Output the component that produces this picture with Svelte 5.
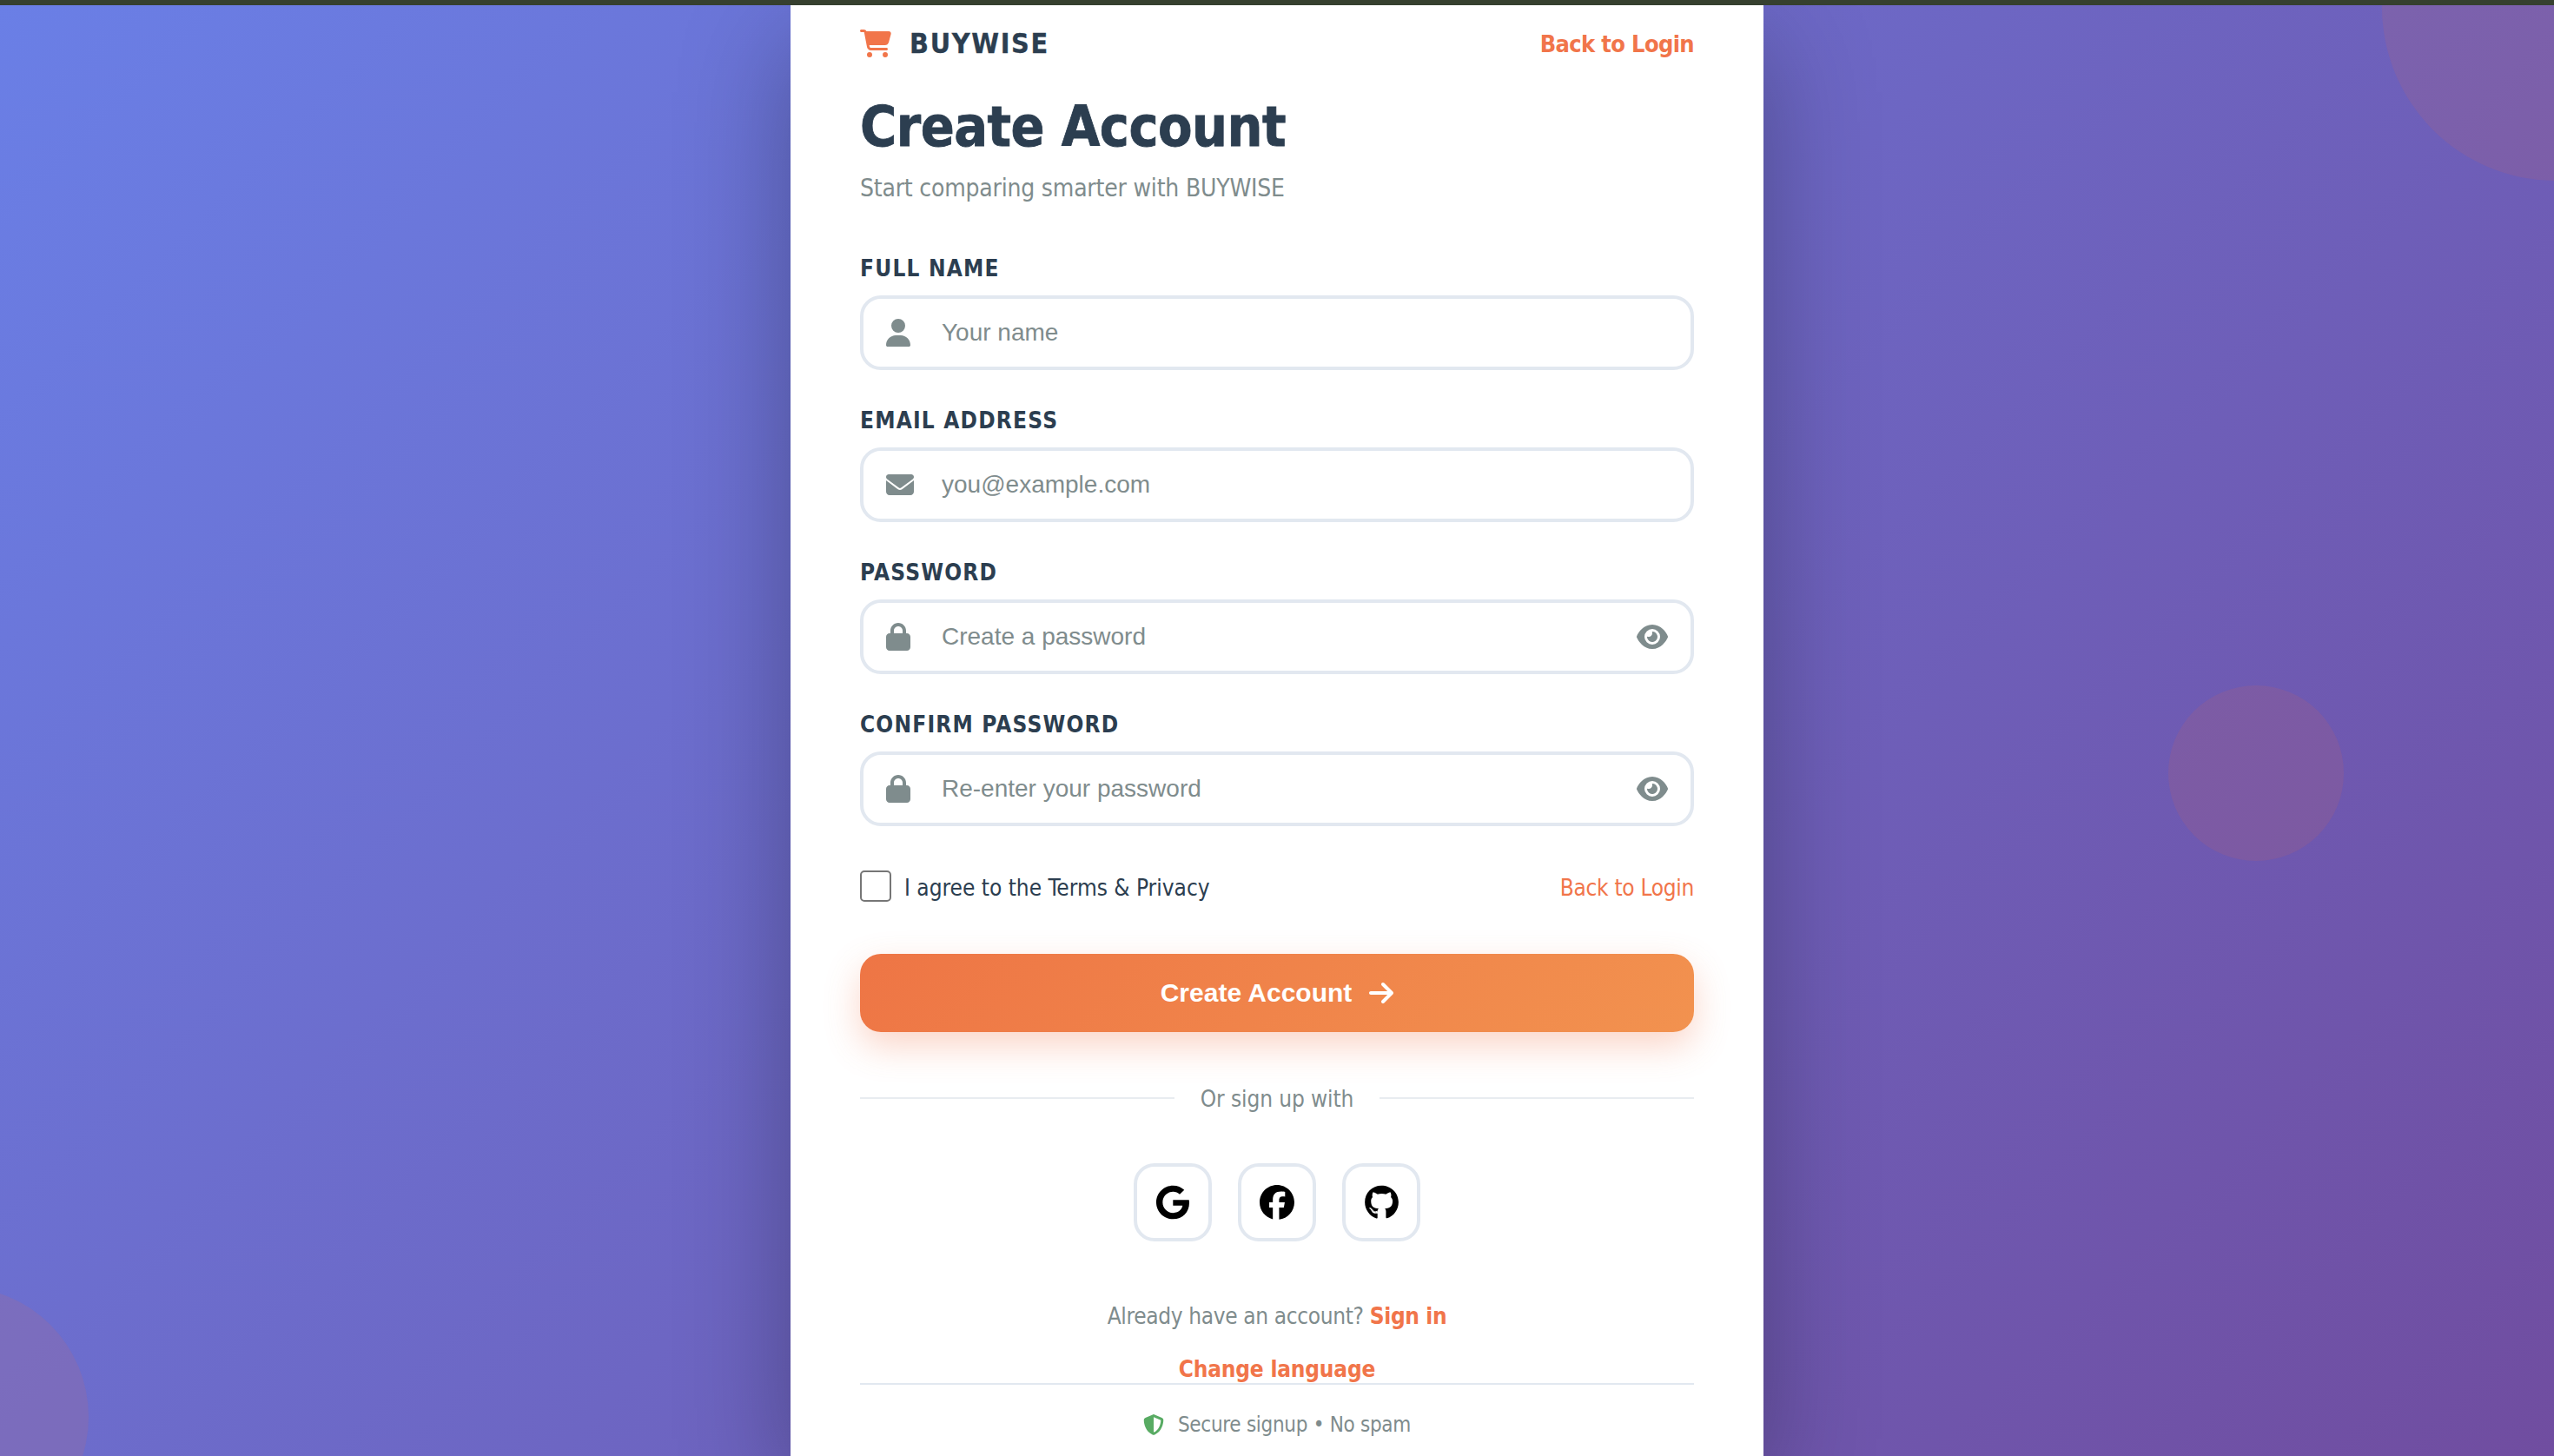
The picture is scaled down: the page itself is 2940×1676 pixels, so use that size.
<script>
	const icons = {
		user: { box: '0 0 448 512', w: 28, d: 'M224 256A128 128 0 1 0 224 0a128 128 0 1 0 0 256zm-45.7 48C79.8 304 0 383.8 0 482.3C0 498.7 13.3 512 29.7 512H418.3c16.4 0 29.7-13.3 29.7-29.7C448 383.8 368.2 304 269.7 304H178.3z' },
		mail: { box: '0 0 512 512', w: 32, d: 'M48 64C21.5 64 0 85.5 0 112c0 15.1 7.1 29.3 19.2 38.4L236.8 313.6c11.4 8.5 27 8.5 38.4 0L492.8 150.4c12.1-9.1 19.2-23.3 19.2-38.4c0-26.5-21.5-48-48-48H48zM0 176V384c0 35.3 28.7 64 64 64H448c35.3 0 64-28.7 64-64V176L294.4 339.2c-22.8 17.1-54 17.1-76.8 0L0 176z' },
		lock: { box: '0 0 448 512', w: 28, d: 'M144 144v48H304V144c0-44.2-35.8-80-80-80s-80 35.8-80 80zM80 192V144C80 64.5 144.5 0 224 0s144 64.5 144 144v48h16c35.3 0 64 28.7 64 64V448c0 35.3-28.7 64-64 64H64c-35.3 0-64-28.7-64-64V256c0-35.3 28.7-64 64-64H80z' }
	};
	const eye = 'M288 32c-80.8 0-145.5 36.8-192.6 80.6C48.6 156 17.3 208 2.5 243.7c-3.3 7.9-3.3 16.7 0 24.6C17.3 304 48.6 356 95.4 399.4C142.5 443.2 207.2 480 288 480s145.5-36.8 192.6-80.6c46.8-43.5 78.1-95.4 93-131.1c3.3-7.9 3.3-16.7 0-24.6c-14.9-35.7-46.2-87.7-93-131.1C433.5 68.8 368.8 32 288 32zM144 256a144 144 0 1 1 288 0 144 144 0 1 1 -288 0zm144-64c0 35.3-28.7 64-64 64c-7.1 0-13.9-1.2-20.3-3.3c-5.5-1.8-11.9 1.6-11.7 7.4c.3 6.9 1.3 13.8 3.2 20.7c13.7 51.2 66.4 81.6 117.6 67.9s81.6-66.4 67.9-117.6c-11.1-41.5-47.8-69.4-88.6-71.1c-5.8-.2-9.2 6.1-7.4 11.7c2.1 6.4 3.3 13.2 3.3 20.3z';

	const fields = [
		{ label: 'FULL NAME', icon: 'user', placeholder: 'Your name', type: 'text' },
		{ label: 'EMAIL ADDRESS', icon: 'mail', placeholder: 'you@example.com', type: 'email' },
		{ label: 'PASSWORD', icon: 'lock', placeholder: 'Create a password', type: 'password', reveal: true },
		{ label: 'CONFIRM PASSWORD', icon: 'lock', placeholder: 'Re-enter your password', type: 'password', reveal: true }
	];

	const socials = [
		{ name: 'Google', box: '0 0 488 512', w: 38, d: 'M488 261.8C488 403.3 391.1 504 248 504 110.8 504 0 393.2 0 256S110.8 8 248 8c66.8 0 123 24.5 166.3 64.9l-67.5 64.9C258.5 52.6 94.3 116.6 94.3 256c0 86.5 69.1 156.6 153.7 156.6 98.2 0 135-70.4 140.8-106.9H248v-85.3h236.1c2.3 12.7 3.9 24.9 3.9 41.4z' },
		{ name: 'Facebook', box: '0 0 512 512', w: 40, d: 'M512 256C512 114.6 397.4 0 256 0S0 114.6 0 256C0 376 82.7 476.8 194.2 504.5V334.2H141.4V256h52.8V222.3c0-87.1 39.4-127.5 125-127.5c16.2 0 44.2 3.2 55.7 6.4V172c-6-.6-16.5-1-29.6-1c-42 0-58.2 15.9-58.2 57.2V256h83.6l-14.4 78.2H287V510.1C413.8 494.8 512 386.9 512 256h0z' },
		{ name: 'GitHub', box: '0 0 496 512', w: 39, d: 'M165.9 397.4c0 2-2.3 3.6-5.2 3.6-3.3 0-5.6-1.6-5.6-3.6 0-2 2.3-3.6 5.2-3.6 3-.3 5.6 1.3 5.6 3.6zm-31.1-4.5c-.7 2 1.3 4.3 4.3 4.9 2.6 1 5.6 0 6.2-2s-1.3-4.3-4.3-5.2c-2.6-.7-5.5 .3-6.2 2.3zm44.2-1.7c-2.9 .7-4.9 2.6-4.6 4.9 .3 2 2.9 3.3 5.9 2.6 2.9-.7 4.9-2.6 4.6-4.6-.3-1.9-3-3.2-5.9-2.9zM244.8 8C106.1 8 0 113.3 0 252c0 110.9 69.8 205.8 169.5 239.2 12.8 2.3 17.3-5.6 17.3-12.1 0-6.2-.3-40.4-.3-61.4 0 0-70 15-84.7-29.8 0 0-11.4-29.1-27.8-36.6 0 0-22.9-15.7 1.6-16 0 0 24.9 2 38.6 25.8 21.9 38.6 58.6 27.5 72.9 20.9 2.3-16 8.8-27.1 16-33.7-55.9-6.2-112.3-14.3-112.3-110.5 0-27.5 7.6-41.3 23.6-58.9-2.6-6.5-11.1-33.3 2.6-67.9 20.9-6.5 69 27 69 27 20-5.6 41.5-8.5 62.8-8.5s42.8 2.9 62.8 8.5c0 0 48.1-33.6 69-27 13.7 34.7 5.2 61.4 2.6 67.9 16 17.7 25.8 31.5 25.8 58.9 0 96.5-58.9 104.2-114.8 110.5 9.2 7.9 17 22.9 17 46.4 0 33.7-.3 75.4-.3 83.6 0 6.5 4.6 14.4 17.3 12.1C428.2 457.8 496 362.9 496 252 496 113.3 383.5 8 244.8 8zM97.2 352.9c-1.3 1-1 3.3 .7 5.2 1.6 1.6 3.9 2.3 5.2 1 1.3-1 1-3.3-.7-5.2-1.6-1.6-3.9-2.3-5.2-1zm-10.8-8.1c-.7 1.3 .3 2.9 2.3 3.9 1.6 1 3.6 .7 4.3-.7 .7-1.3-.3-2.9-2.3-3.9-2-.6-3.6-.3-4.3 .7zm32.4 35.6c-1.6 1.3-1 4.3 1.3 6.2 2.3 2.3 5.2 2.6 6.5 1 1.3-1.3 .7-4.3-1.3-6.2-2.2-2.3-5.2-2.6-6.5-1zm-11.4-14.7c-1.6 1-1.6 3.6 0 5.9 1.6 2.3 4.3 3.3 5.6 2.3 1.6-1.3 1.6-3.9 0-6.2-1.4-2.3-4-3.3-5.6-2z' }
	];
</script>

<div class="topbar"></div>
<main class="page">
	<span class="blob blob-top"></span>
	<span class="blob blob-mid"></span>
	<span class="blob blob-low"></span>

	<section class="card">
		<header class="brand-row">
			<div class="brand">
				<svg class="cart" viewBox="0 0 576 512" aria-hidden="true"><path d="M0 24C0 10.7 10.7 0 24 0H69.5c22 0 41.5 12.8 50.6 32h411c26.3 0 45.5 25 38.6 50.4l-41 152.3c-8.5 31.4-37 53.3-69.5 53.3H170.7l5.4 28.5c2.2 11.3 12.1 19.5 23.6 19.5H488c13.3 0 24 10.7 24 24s-10.7 24-24 24H199.7c-34.6 0-64.3-24.6-70.7-58.5L77.4 54.5c-.7-3.8-4-6.5-7.9-6.5H24C10.7 48 0 37.3 0 24zM128 464a48 48 0 1 1 96 0 48 48 0 1 1 -96 0zm336-48a48 48 0 1 1 0 96 48 48 0 1 1 0-96z" /></svg>
				<span class="brand-name">BUYWISE</span>
			</div>
			<a class="top-link" href="#login">Back to Login</a>
		</header>

		<h1>Create Account</h1>
		<p class="sub">Start comparing smarter with BUYWISE</p>

		<form class="fields" on:submit|preventDefault>
			{#each fields as field}
				<div class="field">
					<label for={field.label}>{field.label}</label>
					<div class="input-wrap">
						<span class="icon-slot">
							<svg class="icon" style="width:{icons[field.icon].w}px" viewBox={icons[field.icon].box} aria-hidden="true"><path d={icons[field.icon].d} /></svg>
						</span>
						<input id={field.label} type={field.type} placeholder={field.placeholder} />
						{#if field.reveal}
							<svg class="eye" viewBox="0 0 576 512" aria-hidden="true"><path d={eye} /></svg>
						{/if}
					</div>
				</div>
			{/each}

			<div class="terms">
				<label class="agree"><input type="checkbox" /><span>I agree to the Terms &amp; Privacy</span></label>
				<a class="plain-link" href="#login">Back to Login</a>
			</div>

			<button class="submit" type="submit">
				<span>Create Account</span>
				<svg viewBox="0 0 448 512" aria-hidden="true"><path d="M438.6 278.6c12.5-12.5 12.5-32.8 0-45.3l-160-160c-12.5-12.5-32.8-12.5-45.3 0s-12.5 32.8 0 45.3L338.8 224 32 224c-17.7 0-32 14.3-32 32s14.3 32 32 32l306.7 0L233.4 393.4c-12.5 12.5-12.5 32.8 0 45.3s32.8 12.5 45.3 0l160-160z" /></svg>
			</button>
		</form>

		<div class="divider"><span>Or sign up with</span></div>

		<div class="socials">
			{#each socials as s}
				<button class="social" type="button" aria-label={s.name}>
					<svg style="width:{s.w}px" viewBox={s.box}><path d={s.d} /></svg>
				</button>
			{/each}
		</div>

		<p class="signin">Already have an account? <a href="#login">Sign in</a></p>
		<a class="lang" href="#lang">Change language</a>

		<footer class="secure">
			<svg viewBox="0 0 512 512" aria-hidden="true"><path d="M256 0c4.6 0 9.2 1 13.4 2.9L457.7 82.8c22 9.3 38.4 31 38.3 57.2c-.5 99.2-41.3 280.7-213.6 363.2c-16.7 8-36.1 8-52.8 0C57.3 420.7 16.5 239.2 16 140c-.1-26.2 16.3-47.9 38.3-57.2L242.7 2.9C246.8 1 251.4 0 256 0zm0 66.8V444.8C394 378 431.1 230.1 432 141.4L256 66.8l0 0z" /></svg>
			<span>Secure signup • No spam</span>
		</footer>
	</section>
</main>

<style>
	:global(body) {
		margin: 0;
		overflow: hidden;
		background: #36402f;
	}

	.topbar {
		height: 6px;
		background: #36402f;
	}

	.page {
		position: relative;
		height: 1670px;
		overflow: hidden;
		display: flex;
		justify-content: center;
		align-items: flex-start;
		background: linear-gradient(135deg, #6a7fe6 0%, #704da0 100%);
		font-family: 'DejaVu Sans', sans-serif;
		font-stretch: condensed;
		color: #2c3e50;
	}

	.blob {
		position: absolute;
		border-radius: 50%;
		background: rgba(255, 107, 53, 0.1);
	}

	.blob-top {
		width: 400px;
		height: 400px;
		left: 2742px;
		top: -198px;
	}

	.blob-mid {
		width: 202px;
		height: 202px;
		left: 2496px;
		top: 783px;
	}

	.blob-low {
		width: 300px;
		height: 300px;
		left: -198px;
		top: 1475px;
	}

	.card {
		position: relative;
		width: 960px;
		flex: none;
		height: 1650px;
		padding: 20px 80px 0;
		background: #fff;
		box-shadow: 0 40px 120px rgba(0, 0, 0, 0.3);
	}

	.brand-row {
		display: flex;
		align-items: center;
		justify-content: space-between;
		height: 48px;
	}

	.brand {
		display: flex;
		align-items: center;
		gap: 21px;
	}

	.cart {
		width: 36px;
		height: 32px;
		fill: #f1754a;
	}

	.brand-name {
		font-size: 32px;
		font-weight: 700;
		letter-spacing: 1.7px;
		-webkit-text-stroke: 0.3px #2c3e50;
	}

	.top-link {
		font-size: 27px;
		font-weight: 700;
		letter-spacing: -0.65px;
		color: #f1754a;
		text-decoration: none;
	}

	h1 {
		margin: 34px 0 0;
		font-size: 64px;
		line-height: 77px;
		font-weight: 700;
		letter-spacing: -0.5px;
		-webkit-text-stroke: 0.8px #2c3e50;
	}

	.sub {
		margin: 12px 0 0;
		font-size: 28px;
		line-height: 40px;
		letter-spacing: -0.2px;
		color: #7f8c8d;
	}

	.fields {
		margin-top: 56px;
	}

	.field {
		margin-bottom: 42px;
	}

	.field > label {
		display: block;
		height: 32px;
		margin-bottom: 15px;
		font-size: 26px;
		line-height: 32px;
		font-weight: 700;
		letter-spacing: 1.2px;
	}

	.input-wrap {
		display: flex;
		align-items: center;
		box-sizing: border-box;
		height: 86px;
		padding: 0 36px 0 26px;
		border: 4px solid #e2e8f0;
		border-radius: 24px;
	}

	.icon-slot {
		display: flex;
		flex: none;
		width: 28px;
	}

	.icon {
		flex: none;
		height: 32px;
		fill: #7f8c8d;
	}

	.input-wrap input {
		flex: 1;
		min-width: 0;
		margin-left: 36px;
		padding: 0;
		border: 0;
		outline: 0;
		background: none;
		font-family: 'Liberation Sans', sans-serif;
		font-size: 28px;
	}

	.input-wrap input::placeholder {
		color: #7f8c8d;
		opacity: 1;
	}

	.eye {
		flex: none;
		width: 36px;
		height: 32px;
		margin-right: -10px;
		fill: #7f8c8d;
	}

	.terms {
		display: flex;
		align-items: center;
		justify-content: space-between;
		height: 40px;
		margin-top: 49px;
	}

	.agree {
		display: flex;
		align-items: center;
		gap: 15px;
		font-size: 26px;
	}

	.agree span,
	.plain-link {
		padding-top: 3px;
	}

	.agree input {
		flex: none;
		appearance: none;
		box-sizing: border-box;
		width: 36px;
		height: 36px;
		margin: 0;
		border: 2px solid #767676;
		border-radius: 5px;
		background: #fff;
	}

	.plain-link {
		font-size: 26px;
		letter-spacing: -0.3px;
		color: #f1754a;
		text-decoration: none;
	}

	.submit {
		display: flex;
		align-items: center;
		justify-content: center;
		gap: 20px;
		width: 100%;
		height: 90px;
		margin-top: 58px;
		border: 0;
		border-radius: 24px;
		background: linear-gradient(135deg, #ee7545 0%, #f2924f 100%);
		box-shadow: 0 16px 40px rgba(242, 117, 72, 0.3);
		color: #fff;
		font-family: 'Liberation Sans', sans-serif;
		font-size: 30px;
		font-weight: 700;
	}

	.submit svg {
		width: 28px;
		height: 32px;
		fill: #fff;
	}

	.divider {
		display: flex;
		align-items: center;
		gap: 30px;
		height: 36px;
		margin-top: 58px;
		font-size: 26px;
		letter-spacing: -0.1px;
		color: #7f8c8d;
	}

	.divider span {
		padding-top: 2px;
	}

	.divider::before,
	.divider::after {
		content: '';
		flex: 1;
		height: 2px;
		background: #e8ecf0;
	}

	.socials {
		display: flex;
		justify-content: center;
		gap: 30px;
		margin-top: 57px;
	}

	.social {
		display: flex;
		align-items: center;
		justify-content: center;
		box-sizing: border-box;
		width: 90px;
		height: 90px;
		padding: 0;
		border: 4px solid #e2e8f0;
		border-radius: 24px;
		background: #fff;
	}

	.social svg {
		height: 40px;
	}

	.signin {
		margin: 68px 0 0;
		font-size: 26px;
		line-height: 36px;
		letter-spacing: -0.35px;
		text-align: center;
		color: #7f8c8d;
	}

	.signin a {
		font-weight: 700;
		color: #f1754a;
		text-decoration: none;
	}

	.lang {
		display: block;
		margin-top: 27px;
		font-size: 26px;
		line-height: 32px;
		font-weight: 700;
		letter-spacing: -0.2px;
		text-align: center;
		color: #f1754a;
		text-decoration: none;
	}

	.secure {
		display: flex;
		align-items: center;
		justify-content: center;
		gap: 16px;
		padding-top: 28px;
		border-top: 2px solid #e2e8f0;
		font-size: 24px;
		line-height: 36px;
		letter-spacing: -0.3px;
		color: #7f8c8d;
	}

	.secure svg {
		width: 24px;
		height: 24px;
		fill: #58ab63;
	}
</style>
